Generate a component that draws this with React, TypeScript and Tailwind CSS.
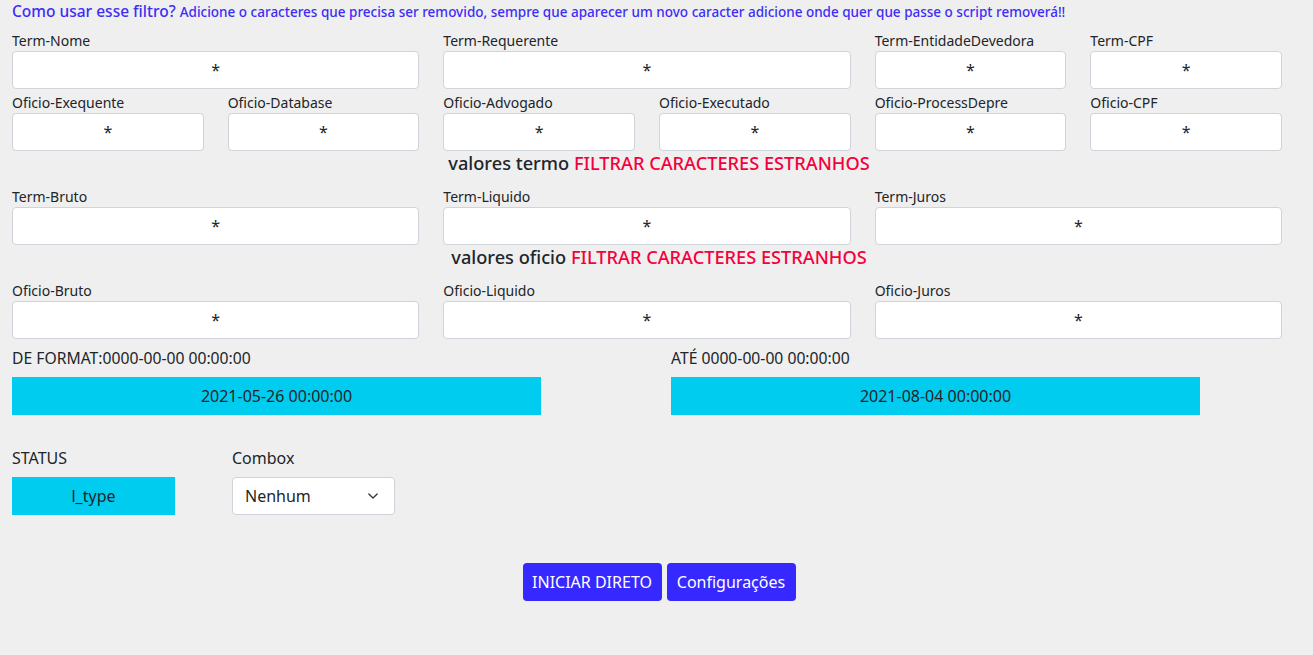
import React from "react";

const Field = ({ label, span }: { label: string; span: 1 | 2 }) => (
  <div className={span === 2 ? "col-span-2 flex flex-col" : "col-span-1 flex flex-col"}>
    <label className="text-[14px] leading-[21px] text-[#212529]">{label}</label>
    <div className="h-[38px] rounded-[4px] border border-[#ced4da] bg-white flex items-center justify-center text-[16px] text-[#212529]">
      *
    </div>
  </div>
);

const Heading = ({ title }: { title: string }) => (
  <div className="w-[1294px] text-center text-[18.2px] leading-[24px] font-medium mb-[11px]">
    <span className="text-[#212529]">{title} </span>
    <span className="text-[#f5003d]">FILTRAR CARACTERES ESTRANHOS</span>
  </div>
);

export default function App() {
  return (
    <div className="min-h-[655px] bg-[#efefef] px-3 font-['Noto_Sans',sans-serif] text-[#212529]">
      <div className="h-[24px] leading-[22px] mb-[6px] text-[#3d2df5] font-medium whitespace-nowrap">
        <span className="text-[15.5px]">Como usar esse filtro?</span>{" "}
        <span className="text-[13.5px]">
          Adicione o caracteres que precisa ser removido, sempre que aparecer um novo caracter adicione onde quer que passe o script removerá!!
        </span>
      </div>

      <div className="w-[1270px] grid grid-cols-6 gap-x-6 gap-y-[3px]">
        <Field label="Term-Nome" span={2} />
        <Field label="Term-Requerente" span={2} />
        <Field label="Term-EntidadeDevedora" span={1} />
        <Field label="Term-CPF" span={1} />
        <Field label="Oficio-Exequente" span={1} />
        <Field label="Oficio-Database" span={1} />
        <Field label="Oficio-Advogado" span={1} />
        <Field label="Oficio-Executado" span={1} />
        <Field label="Oficio-ProcessDepre" span={1} />
        <Field label="Oficio-CPF" span={1} />
      </div>

      <Heading title="valores termo" />
      <div className="w-[1270px] grid grid-cols-6 gap-x-6">
        <Field label="Term-Bruto" span={2} />
        <Field label="Term-Liquido" span={2} />
        <Field label="Term-Juros" span={2} />
      </div>

      <Heading title="valores oficio" />
      <div className="w-[1270px] grid grid-cols-6 gap-x-6">
        <Field label="Oficio-Bruto" span={2} />
        <Field label="Oficio-Liquido" span={2} />
        <Field label="Oficio-Juros" span={2} />
      </div>

      <div className="flex mt-[7px]">
        <div className="w-[659px] shrink-0 flex flex-col">
          <div className="text-[15.7px] leading-[24px] mb-[7px]">DE FORMAT:0000-00-00 00:00:00</div>
          <div className="w-[529px] h-[38px] bg-[#00ccf0] flex items-center justify-center text-[16px]">
            2021-05-26 00:00:00
          </div>
        </div>
        <div className="w-[529px] shrink-0 flex flex-col">
          <div className="text-[15.7px] leading-[24px] mb-[7px]">ATÉ 0000-00-00 00:00:00</div>
          <div className="w-[529px] h-[38px] bg-[#00ccf0] flex items-center justify-center text-[16px]">
            2021-08-04 00:00:00
          </div>
        </div>
      </div>

      <div className="flex mt-[31px]">
        <div className="w-[220px] flex flex-col">
          <div className="text-[16px] leading-[24px] mb-[7px]">STATUS</div>
          <div className="w-[163px] h-[38px] bg-[#00ccf0] flex items-center justify-center text-[16px]">
            l_type
          </div>
        </div>
        <div className="w-[220px] flex flex-col">
          <div className="text-[16px] leading-[24px] mb-[7px]">Combox</div>
          <div className="w-[163px] h-[38px] bg-white border border-[#ced4da] rounded-[4px] flex items-center justify-between pl-3 pr-[14px] text-[16px]">
            <span>Nenhum</span>
            <svg width="14" height="10" viewBox="0 0 16 12" fill="none">
              <path d="M3 3.5l5 5 5-5" stroke="#343a40" strokeWidth="1.6" strokeLinecap="round" strokeLinejoin="round" />
            </svg>
          </div>
        </div>
      </div>

      <div className="flex justify-center gap-[5px] mt-[48px] w-[1294px]">
        <button className="w-[139px] h-[38px] rounded-[4px] bg-[#3629ff] text-white text-[16px]">INICIAR DIRETO</button>
        <button className="w-[129px] h-[38px] rounded-[4px] bg-[#3629ff] text-white text-[16px]">Configurações</button>
      </div>
    </div>
  );
}
